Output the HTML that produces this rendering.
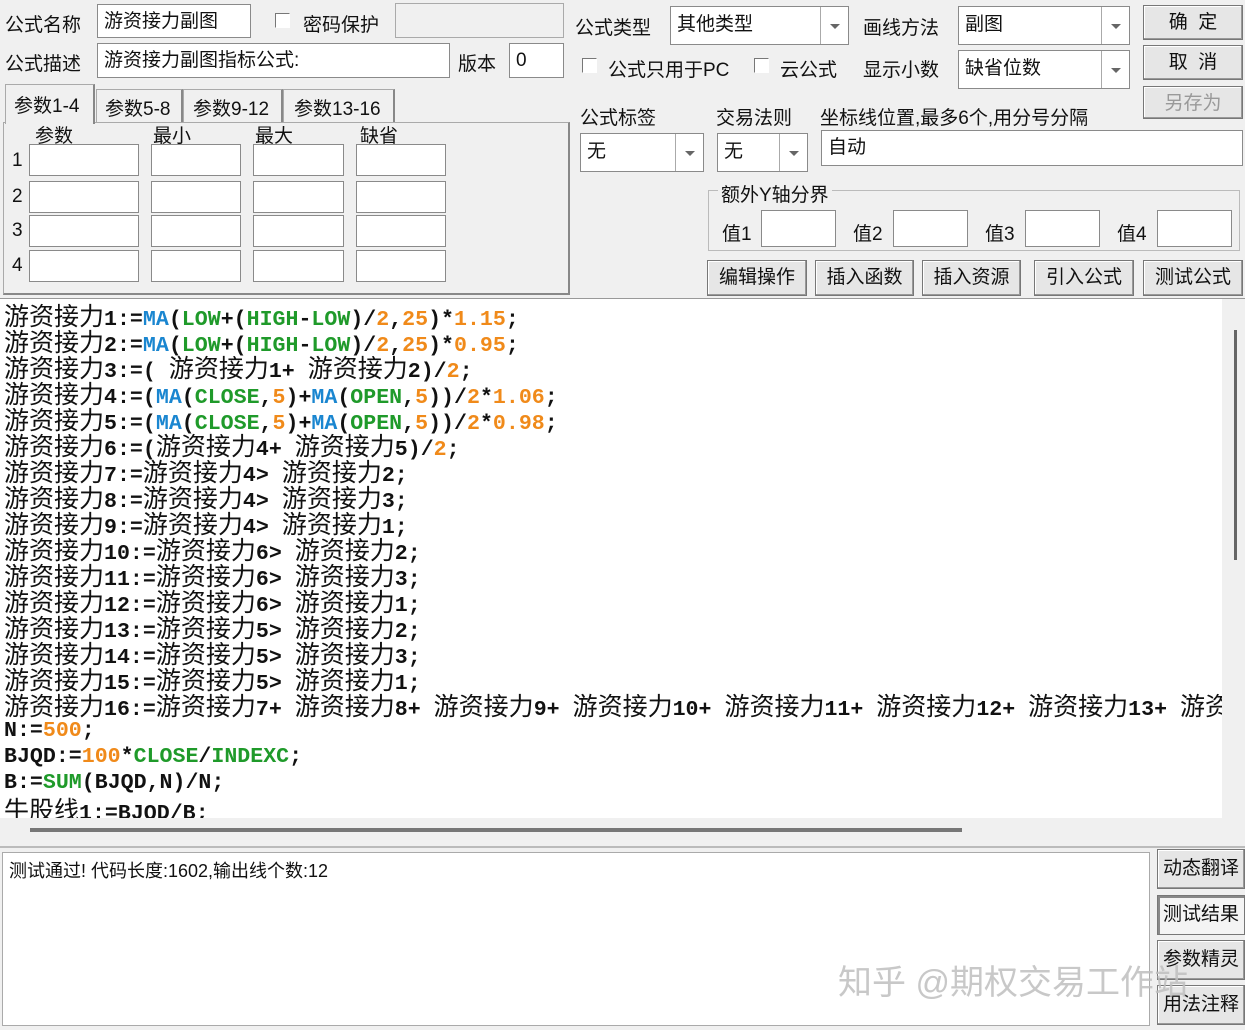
<!DOCTYPE html><html><head><meta charset="utf-8"><style>
body{margin:0;width:1245px;height:1030px;background:#f0f0f0;position:relative;overflow:hidden;font-family:"Liberation Sans","Microsoft YaHei","Noto Sans CJK SC",sans-serif;font-size:19px;color:#111}
.a{position:absolute;white-space:nowrap}
.in{position:absolute;background:#fff;border:1px solid #8a8a8a;box-sizing:border-box;padding:3px 6px;font-size:19px;line-height:28px}
.dis{background:#f0f0f0;border-color:#aaa}
.dd{position:absolute;top:0;right:0;width:28px;height:100%;border-left:1px solid #aaa;box-sizing:border-box}
.dd:after{content:"";position:absolute;left:9px;top:50%;margin-top:-2px;border:5px solid transparent;border-top:5px solid #666}
.btn{position:absolute;background:#e6e6e6;border:1px solid #777;box-shadow:inset -1px -1px 0 #999,inset 1px 1px 0 #fff;box-sizing:border-box;text-align:center;font-size:19px;line-height:33px}
.cb{position:absolute;width:15px;height:15px;border:1px solid #777;border-right-color:#fff;border-bottom-color:#fff;background:#fff;box-sizing:border-box}
.code{position:absolute;left:0;top:299px;width:1222px;height:519px;background:#fff;overflow:hidden}
.ln{position:absolute;left:4px;font-family:"Liberation Mono",monospace;font-weight:bold;font-size:21.6px;line-height:26px;height:26px;white-space:pre;color:#111}
.ln .c{font-family:"Noto Sans CJK SC",sans-serif;font-weight:normal;font-size:25px}
.b{color:#1a86d0}.g{color:#1f9a2a}.o{color:#f08a1a}
</style></head><body>
<div class="a" style="left:5px;top:10px">公式名称</div>
<div class="in" style="left:97px;top:4px;width:154px;height:34px">游资接力副图</div>
<div class="cb" style="left:275px;top:13px"></div>
<div class="a" style="left:303px;top:10px">密码保护</div>
<div class="in dis" style="left:395px;top:3px;width:169px;height:35px"></div>
<div class="a" style="left:5px;top:49px">公式描述</div>
<div class="in" style="left:97px;top:43px;width:353px;height:35px">游资接力副图指标公式:</div>
<div class="a" style="left:458px;top:49px">版本</div>
<div class="in" style="left:509px;top:43px;width:55px;height:35px">0</div>

<div style="position:absolute;left:3px;top:122px;width:567px;height:173px;border:1px solid #aaa;border-right:2px solid #888;border-bottom:2px solid #888;box-sizing:border-box"></div>
<div class="a" style="left:5px;top:84px;width:90px;height:40px;background:#f0f0f0;border:1px solid #aaa;border-bottom:none;border-right:2px solid #888;box-sizing:border-box;padding:6px 0 0 8px">参数1-4</div>
<div class="a" style="left:96px;top:89px;width:87px;height:33px;border:1px solid #aaa;border-bottom:none;border-right:2px solid #888;box-sizing:border-box;padding:4px 0 0 8px">参数5-8</div>
<div class="a" style="left:183px;top:89px;width:100px;height:33px;border:1px solid #aaa;border-bottom:none;border-right:2px solid #888;box-sizing:border-box;padding:4px 0 0 9px">参数9-12</div>
<div class="a" style="left:283px;top:89px;width:112px;height:33px;border:1px solid #aaa;border-bottom:none;border-right:2px solid #888;box-sizing:border-box;padding:4px 0 0 10px">参数13-16</div>
<div class="a" style="left:35px;top:121px">参数</div><div class="a" style="left:153px;top:121px">最小</div><div class="a" style="left:255px;top:121px">最大</div><div class="a" style="left:360px;top:121px">缺省</div>
<div class="a" style="left:12px;top:150px">1</div><div class="a" style="left:12px;top:186px">2</div><div class="a" style="left:12px;top:220px">3</div><div class="a" style="left:12px;top:255px">4</div>
<div class="in" style="left:29px;top:144px;width:110px;height:32px"></div><div class="in" style="left:151px;top:144px;width:90px;height:32px"></div><div class="in" style="left:253px;top:144px;width:91px;height:32px"></div><div class="in" style="left:356px;top:144px;width:90px;height:32px"></div>
<div class="in" style="left:29px;top:181px;width:110px;height:32px"></div><div class="in" style="left:151px;top:181px;width:90px;height:32px"></div><div class="in" style="left:253px;top:181px;width:91px;height:32px"></div><div class="in" style="left:356px;top:181px;width:90px;height:32px"></div>
<div class="in" style="left:29px;top:215px;width:110px;height:32px"></div><div class="in" style="left:151px;top:215px;width:90px;height:32px"></div><div class="in" style="left:253px;top:215px;width:91px;height:32px"></div><div class="in" style="left:356px;top:215px;width:90px;height:32px"></div>
<div class="in" style="left:29px;top:250px;width:110px;height:32px"></div><div class="in" style="left:151px;top:250px;width:90px;height:32px"></div><div class="in" style="left:253px;top:250px;width:91px;height:32px"></div><div class="in" style="left:356px;top:250px;width:90px;height:32px"></div>

<div class="a" style="left:575px;top:13px">公式类型</div>
<div class="in" style="left:670px;top:6px;width:179px;height:39px;line-height:30px">其他类型<div class="dd"></div></div>
<div class="a" style="left:863px;top:13px">画线方法</div>
<div class="in" style="left:958px;top:6px;width:172px;height:39px;line-height:30px">副图<div class="dd"></div></div>
<div class="btn" style="left:1143px;top:5px;width:100px;height:35px">确&nbsp;&nbsp;定</div>
<div class="cb" style="left:582px;top:58px"></div><div class="a" style="left:608px;top:55px">公式只用于PC</div>
<div class="cb" style="left:754px;top:58px"></div><div class="a" style="left:780px;top:55px">云公式</div>
<div class="a" style="left:863px;top:55px">显示小数</div>
<div class="in" style="left:958px;top:50px;width:172px;height:39px;line-height:30px">缺省位数<div class="dd"></div></div>
<div class="btn" style="left:1143px;top:45px;width:100px;height:35px">取&nbsp;&nbsp;消</div>
<div class="btn" style="left:1143px;top:86px;width:100px;height:33px;color:#999">另存为</div>
<div class="a" style="left:580px;top:103px">公式标签</div>
<div class="a" style="left:716px;top:103px">交易法则</div>
<div class="a" style="left:820px;top:103px">坐标线位置,最多6个,用分号分隔</div>
<div class="in" style="left:580px;top:133px;width:124px;height:39px;line-height:30px">无<div class="dd"></div></div>
<div class="in" style="left:717px;top:133px;width:91px;height:39px;line-height:30px">无<div class="dd"></div></div>
<div class="in" style="left:821px;top:130px;width:422px;height:36px">自动</div>
<div style="position:absolute;left:708px;top:190px;width:532px;height:61px;border:1px solid #bbb;box-sizing:border-box"></div>
<div class="a" style="left:718px;top:180px;background:#f0f0f0;padding:0 3px">额外Y轴分界</div>
<div class="a" style="left:722px;top:219px">值1</div><div class="in" style="left:761px;top:210px;width:75px;height:37px"></div>
<div class="a" style="left:853px;top:219px">值2</div><div class="in" style="left:893px;top:210px;width:75px;height:37px"></div>
<div class="a" style="left:985px;top:219px">值3</div><div class="in" style="left:1025px;top:210px;width:75px;height:37px"></div>
<div class="a" style="left:1117px;top:219px">值4</div><div class="in" style="left:1157px;top:210px;width:75px;height:37px"></div>
<div class="btn" style="left:707px;top:260px;width:100px;height:36px">编辑操作</div>
<div class="btn" style="left:815px;top:260px;width:99px;height:36px">插入函数</div>
<div class="btn" style="left:922px;top:260px;width:99px;height:36px">插入资源</div>
<div class="btn" style="left:1034px;top:260px;width:100px;height:36px">引入公式</div>
<div class="btn" style="left:1143px;top:260px;width:100px;height:36px">测试公式</div>

<div style="position:absolute;left:0;top:298px;width:1245px;height:1px;background:#999"></div>
<div class="code">
<div class="ln" style="top:3px"><span class="c">游资接力</span>1:=<span class="b">MA</span>(<span class="g">LOW</span>+(<span class="g">HIGH</span>-<span class="g">LOW</span>)/<span class="o">2</span>,<span class="o">25</span>)*<span class="o">1.15</span>;</div>
<div class="ln" style="top:29px"><span class="c">游资接力</span>2:=<span class="b">MA</span>(<span class="g">LOW</span>+(<span class="g">HIGH</span>-<span class="g">LOW</span>)/<span class="o">2</span>,<span class="o">25</span>)*<span class="o">0.95</span>;</div>
<div class="ln" style="top:55px"><span class="c">游资接力</span>3:=( <span class="c">游资接力</span>1+ <span class="c">游资接力</span>2)/<span class="o">2</span>;</div>
<div class="ln" style="top:81px"><span class="c">游资接力</span>4:=(<span class="b">MA</span>(<span class="g">CLOSE</span>,<span class="o">5</span>)+<span class="b">MA</span>(<span class="g">OPEN</span>,<span class="o">5</span>))/<span class="o">2</span>*<span class="o">1.06</span>;</div>
<div class="ln" style="top:107px"><span class="c">游资接力</span>5:=(<span class="b">MA</span>(<span class="g">CLOSE</span>,<span class="o">5</span>)+<span class="b">MA</span>(<span class="g">OPEN</span>,<span class="o">5</span>))/<span class="o">2</span>*<span class="o">0.98</span>;</div>
<div class="ln" style="top:133px"><span class="c">游资接力</span>6:=(<span class="c">游资接力</span>4+ <span class="c">游资接力</span>5)/<span class="o">2</span>;</div>
<div class="ln" style="top:159px"><span class="c">游资接力</span>7:=<span class="c">游资接力</span>4> <span class="c">游资接力</span>2;</div>
<div class="ln" style="top:185px"><span class="c">游资接力</span>8:=<span class="c">游资接力</span>4> <span class="c">游资接力</span>3;</div>
<div class="ln" style="top:211px"><span class="c">游资接力</span>9:=<span class="c">游资接力</span>4> <span class="c">游资接力</span>1;</div>
<div class="ln" style="top:237px"><span class="c">游资接力</span>10:=<span class="c">游资接力</span>6> <span class="c">游资接力</span>2;</div>
<div class="ln" style="top:263px"><span class="c">游资接力</span>11:=<span class="c">游资接力</span>6> <span class="c">游资接力</span>3;</div>
<div class="ln" style="top:289px"><span class="c">游资接力</span>12:=<span class="c">游资接力</span>6> <span class="c">游资接力</span>1;</div>
<div class="ln" style="top:315px"><span class="c">游资接力</span>13:=<span class="c">游资接力</span>5> <span class="c">游资接力</span>2;</div>
<div class="ln" style="top:341px"><span class="c">游资接力</span>14:=<span class="c">游资接力</span>5> <span class="c">游资接力</span>3;</div>
<div class="ln" style="top:367px"><span class="c">游资接力</span>15:=<span class="c">游资接力</span>5> <span class="c">游资接力</span>1;</div>
<div class="ln" style="top:393px"><span class="c">游资接力</span>16:=<span class="c">游资接力</span>7+ <span class="c">游资接力</span>8+ <span class="c">游资接力</span>9+ <span class="c">游资接力</span>10+ <span class="c">游资接力</span>11+ <span class="c">游资接力</span>12+ <span class="c">游资接力</span>13+ <span class="c">游资接力</span>14+</div>
<div class="ln" style="top:419px">N:=<span class="o">500</span>;</div>
<div class="ln" style="top:445px">BJQD:=<span class="o">100</span>*<span class="g">CLOSE</span>/<span class="g">INDEXC</span>;</div>
<div class="ln" style="top:471px">B:=<span class="g">SUM</span>(BJQD,N)/N;</div>
<div class="ln" style="top:497px"><span class="c">牛股线</span>1:=BJQD/B;</div>
</div>
<div style="position:absolute;left:1234px;top:330px;width:3px;height:230px;background:#666"></div>
<div style="position:absolute;left:30px;top:828px;width:932px;height:4px;background:#777"></div>
<div style="position:absolute;left:0;top:846px;width:1245px;height:2px;background:#bbb"></div>
<div style="position:absolute;left:2px;top:852px;width:1148px;height:174px;background:#fff;border:1px solid #aaa;box-sizing:border-box"></div>
<div class="a" style="left:9px;top:857px;font-size:18px">测试通过! 代码长度:1602,输出线个数:12</div>
<div class="btn" style="left:1157px;top:849px;width:88px;height:40px;line-height:38px">动态翻译</div>
<div class="btn" style="left:1157px;top:895px;width:88px;height:40px;line-height:38px;box-shadow:inset 2px 2px 0 #888;background:#f4f4f4">测试结果</div>
<div class="btn" style="left:1157px;top:940px;width:88px;height:40px;line-height:38px">参数精灵</div>
<div class="btn" style="left:1157px;top:985px;width:88px;height:40px;line-height:38px">用法注释</div>
<div class="a" style="left:838px;top:955px;font-size:34px;color:rgba(190,190,190,0.85)">知乎 @期权交易工作站</div>
</body></html>
